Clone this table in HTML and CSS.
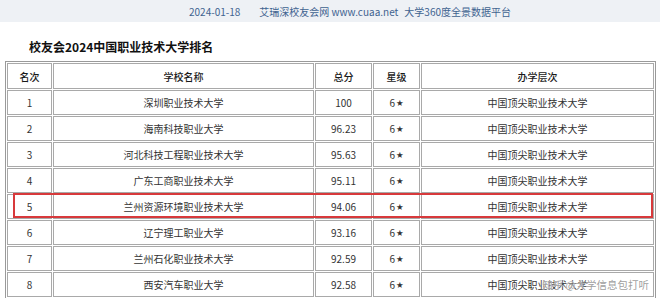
FILE: index.html
```html
<!DOCTYPE html>
<html lang="zh-CN">
<head>
<meta charset="utf-8">
<title>校友会2024中国职业技术大学排名</title>
<link rel="stylesheet" href="styles.css">
</head>
<body>
<header class="banner">
  <span class="date">2024-01-18</span>
  <span class="site">艾瑞深校友会网 www.cuaa.net</span>
  <span class="slogan">大学360度全景数据平台</span>
</header>
<h1 class="title">校友会2024中国职业技术大学排名</h1>
<div class="wrap">
  <div class="table" role="table">
    <div class="cell head">名次</div><div class="cell head">学校名称</div><div class="cell head">总分</div><div class="cell head">星级</div><div class="cell head">办学层次</div>
    <div class="cell">1</div><div class="cell">深圳职业技术大学</div><div class="cell">100</div><div class="cell">6<span class="star">★</span></div><div class="cell">中国顶尖职业技术大学</div>
    <div class="cell">2</div><div class="cell">海南科技职业大学</div><div class="cell">96.23</div><div class="cell">6<span class="star">★</span></div><div class="cell">中国顶尖职业技术大学</div>
    <div class="cell">3</div><div class="cell">河北科技工程职业技术大学</div><div class="cell">95.63</div><div class="cell">6<span class="star">★</span></div><div class="cell">中国顶尖职业技术大学</div>
    <div class="cell">4</div><div class="cell">广东工商职业技术大学</div><div class="cell">95.11</div><div class="cell">6<span class="star">★</span></div><div class="cell">中国顶尖职业技术大学</div>
    <div class="cell">5</div><div class="cell">兰州资源环境职业技术大学</div><div class="cell">94.06</div><div class="cell">6<span class="star">★</span></div><div class="cell">中国顶尖职业技术大学</div>
    <div class="cell">6</div><div class="cell">辽宁理工职业大学</div><div class="cell">93.16</div><div class="cell">6<span class="star">★</span></div><div class="cell">中国顶尖职业技术大学</div>
    <div class="cell">7</div><div class="cell">兰州石化职业技术大学</div><div class="cell">92.59</div><div class="cell">6<span class="star">★</span></div><div class="cell">中国顶尖职业技术大学</div>
    <div class="cell">8</div><div class="cell">西安汽车职业大学</div><div class="cell">92.58</div><div class="cell">6<span class="star">★</span></div><div class="cell">中国顶尖职业技术大学</div>
  </div>
  <div class="highlight"></div>
  <div class="watermark">知乎 @大学信息包打听</div>
</div>
</body>
</html>
```

FILE: styles.css
```css
html, body {
  margin: 0;
  padding: 0;
  background: #ffffff;
  overflow: hidden;
}
body {
  font-family: "Noto Sans CJK SC", "Noto Sans", sans-serif;
  color: #333333;
}
.banner {
  height: 22px;
  background: #eef1f5;
  display: flex;
  align-items: center;
  padding-left: 189px;
  font-size: 10px;
  color: #3f6390;
  white-space: nowrap;
}
.date {
  margin-right: 19px;
}
.site {
  margin-right: 6px;
}
.title {
  margin: 0;
  padding: 17px 0 6px 29px;
  font-size: 12px;
  line-height: 16px;
  font-weight: bold;
  color: #111111;
}
.wrap {
  position: relative;
  margin-left: 5px;
  width: 651px;
}
.table {
  display: grid;
  grid-template-columns: 45px 261px 57px 47px 233px;
  grid-auto-rows: 25px;
  grid-template-rows: 26px;
  gap: 1px;
  padding: 1px;
  border: 1px solid #9a9a9a;
  width: fit-content;
}
.cell {
  box-sizing: border-box;
  border: 1px solid #a9a9a9;
  display: flex;
  align-items: center;
  justify-content: center;
  font-size: 10px;
  color: #333333;
  white-space: nowrap;
}
.head {
  font-weight: 500;
  color: #1a1a1a;
}
.star {
  font-family: "DejaVu Sans", sans-serif;
  font-size: 8.5px;
  margin-left: 1px;
}
.highlight {
  position: absolute;
  left: 8px;
  top: 132px;
  width: 640px;
  height: 25px;
  box-sizing: border-box;
  border: 2px solid #d8393b;
}
.watermark {
  position: absolute;
  right: 7px;
  top: 216px;
  font-size: 10.5px;
  color: rgba(140, 140, 140, 0.85);
  text-shadow: 0 0 2px #ffffff, 0 0 1px #ffffff;
  white-space: nowrap;
}
```
